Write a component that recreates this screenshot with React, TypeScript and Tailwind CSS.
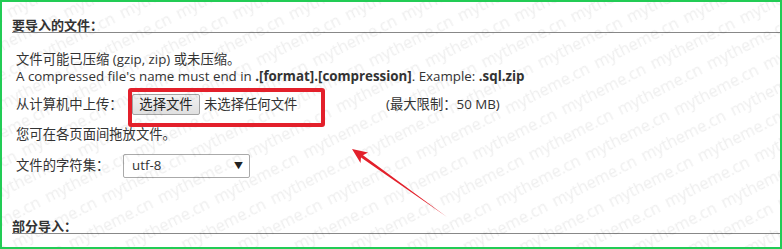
import React from "react";

const FONT = "font-['Open_Sans','Noto_Sans_CJK_SC',sans-serif]";

function Watermark() {
  return (
    <svg
      className="pointer-events-none absolute left-0 top-0"
      width="782"
      height="249"
      viewBox="0 0 782 249"
    >
      <defs>
        <pattern
          id="wm"
          width="100"
          height="52"
          patternUnits="userSpaceOnUse"
          patternTransform="rotate(-27)"
        >
          <text
            x="0"
            y="18"
            fontFamily="'Open Sans', sans-serif"
            fontSize="16"
            fill="rgba(0,0,0,0.065)"
          >
            mytheme.cn
          </text>
          <text
            x="-50"
            y="44"
            fontFamily="'Open Sans', sans-serif"
            fontSize="16"
            fill="rgba(0,0,0,0.065)"
          >
            mytheme.cn
          </text>
          <text
            x="50"
            y="44"
            fontFamily="'Open Sans', sans-serif"
            fontSize="16"
            fill="rgba(0,0,0,0.065)"
          >
            mytheme.cn
          </text>
        </pattern>
      </defs>
      <rect x="0" y="0" width="782" height="249" fill="url(#wm)" />
    </svg>
  );
}

export default function App() {
  return (
    <div
      className={`relative w-[782px] h-[249px] overflow-hidden bg-white border-2 border-[#22cc55] text-[13.33px] text-[#333] ${FONT}`}
    >
      <div className="pl-[10px]">
        <div className="mt-[16px] h-[15px] leading-[15px] border-b border-[#888] font-bold text-[13px] text-[#333]">
          要导入的文件：
        </div>

        <div className="pl-[4px]">
          <div className="mt-[18px] leading-[17px]">
            <div>文件可能已压缩 (gzip, zip) 或未压缩。</div>
            <div>
              A compressed file's name must end in <b>.[format].[compression]</b>. Example: <b>.sql.zip</b>
            </div>
          </div>

          <div className="mt-[9px] flex items-center h-[21px]">
            <span className="w-[116px] shrink-0">从计算机中上传：</span>
            <span className="h-[21px] w-[68px] shrink-0 flex items-center justify-center border border-[#a3a3a3] rounded-[2px] bg-gradient-to-b from-[#f2f2f2] to-[#e0e0e0] text-[#222]">
              选择文件
            </span>
            <span className="ml-[4px] w-[182px] shrink-0">未选择任何文件</span>
            <span>(最大限制：50 MB)</span>
          </div>

          <div className="mt-[11px] leading-[17px]">您可在各页面间拖放文件。</div>

          <div className="mt-[11px] flex items-center h-[24px]">
            <span className="w-[107px] shrink-0">文件的字符集：</span>
            <div className="h-[24px] w-[127px] flex items-center justify-between border border-[#aaa] rounded-[2px] bg-white pl-[8px] pr-[6px]">
              <span>utf-8</span>
              <span className="text-[9px] text-[#222]">▼</span>
            </div>
          </div>
        </div>

        <div className="mt-[41px] h-[15px] leading-[15px] border-b border-[#888] font-bold text-[13px] text-[#333]">
          部分导入：
        </div>
      </div>

      <Watermark />

      {/* red highlight box */}
      <div className="pointer-events-none absolute left-[126px] top-[86px] w-[197px] h-[39px] border-[4px] border-[#e3202b] rounded-[3px]" />

      {/* red arrow */}
      <svg
        className="pointer-events-none absolute left-0 top-0"
        width="782"
        height="249"
        viewBox="0 0 782 249"
      >
        <polygon
          points="350,147 366,150.5 361,153.2 445,215 359,155.6 358.5,161"
          fill="#e3202b"
        />
      </svg>
    </div>
  );
}
